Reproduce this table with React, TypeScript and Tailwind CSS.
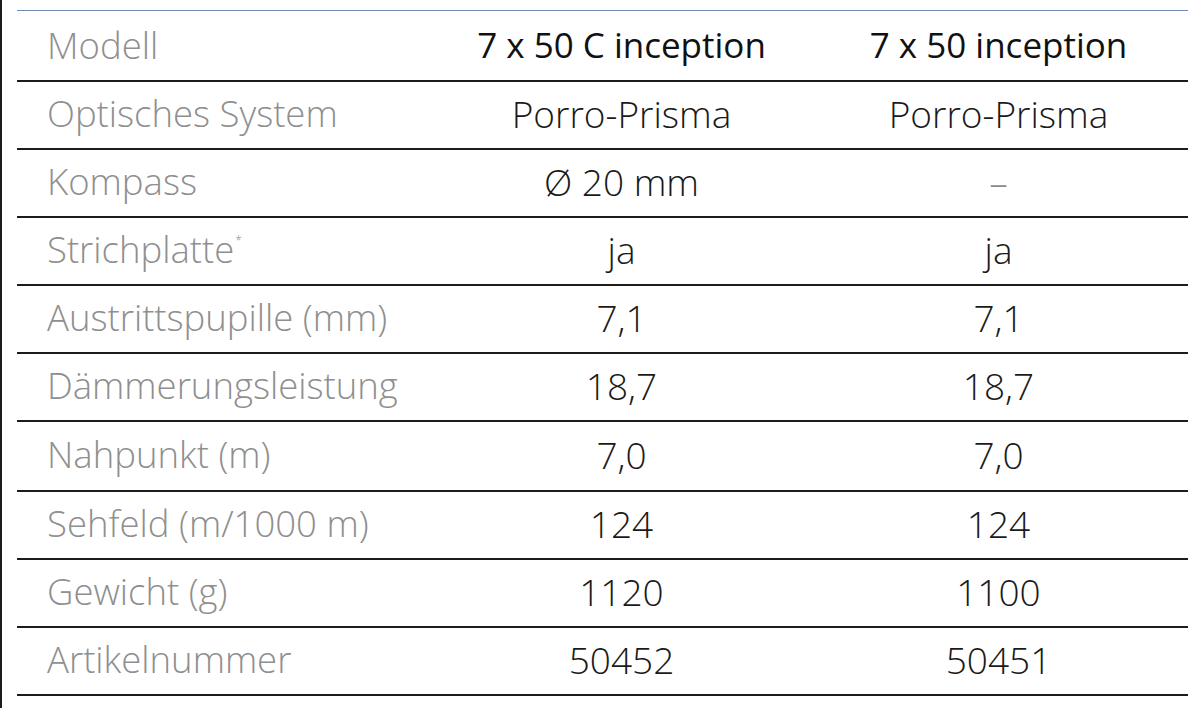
const rows = [
  { label: "Optisches System", a: "Porro-Prisma", b: "Porro-Prisma" },
  { label: "Kompass", a: "Ø 20 mm", b: "–" },
  { label: "Strichplatte", a: "ja", b: "ja", star: true },
  { label: "Austrittspupille (mm)", a: "7,1", b: "7,1" },
  { label: "Dämmerungsleistung", a: "18,7", b: "18,7" },
  { label: "Nahpunkt (m)", a: "7,0", b: "7,0", tall: true },
  { label: "Sehfeld (m/1000 m)", a: "124", b: "124" },
  { label: "Gewicht (g)", a: "1120", b: "1100" },
  { label: "Artikelnummer", a: "50452", b: "50451" },
];

export default function App() {
  return (
    <div className="w-[1200px] h-[708px] bg-white border-l-2 border-[#1c1c1c] pl-[15px] pt-[10px] font-['Open_Sans',sans-serif]">
      <div className="w-[1171px] border-t border-[#6f8ab0]">
        <div className="grid grid-cols-[416px_377px_377px] h-[71px] items-center border-b-2 border-[#1c1c1c]">
          <div className="pl-[30px] text-[36.5px] font-light text-[#8f8f8f]">Modell</div>
          <div className="text-center text-[35px] font-medium text-[#111]">7 x 50 C inception</div>
          <div className="text-center text-[35px] font-medium text-[#111]">7 x 50 inception</div>
        </div>
        {rows.map((r, i) => (
          <div
            key={i}
            className={`grid grid-cols-[416px_377px_377px] items-center pb-[3px] border-b-2 border-[#1c1c1c] ${r.tall ? "h-[70px]" : "h-[68px]"}`}
          >
            <div className="pl-[30px] text-[36.5px] font-light text-[#8f8f8f] whitespace-nowrap">
              {r.label}
              {r.star && <span className="text-[12px] align-top relative top-[10px] ml-[1px]">*</span>}
            </div>
            <div className="text-center text-[37px] font-light text-[#1a1a1a]">{r.a}</div>
            <div className={`text-center text-[37px] font-light ${r.b === "–" ? "text-[#8a8a8a]" : "text-[#1a1a1a]"}`}>{r.b}</div>
          </div>
        ))}
      </div>
    </div>
  );
}
